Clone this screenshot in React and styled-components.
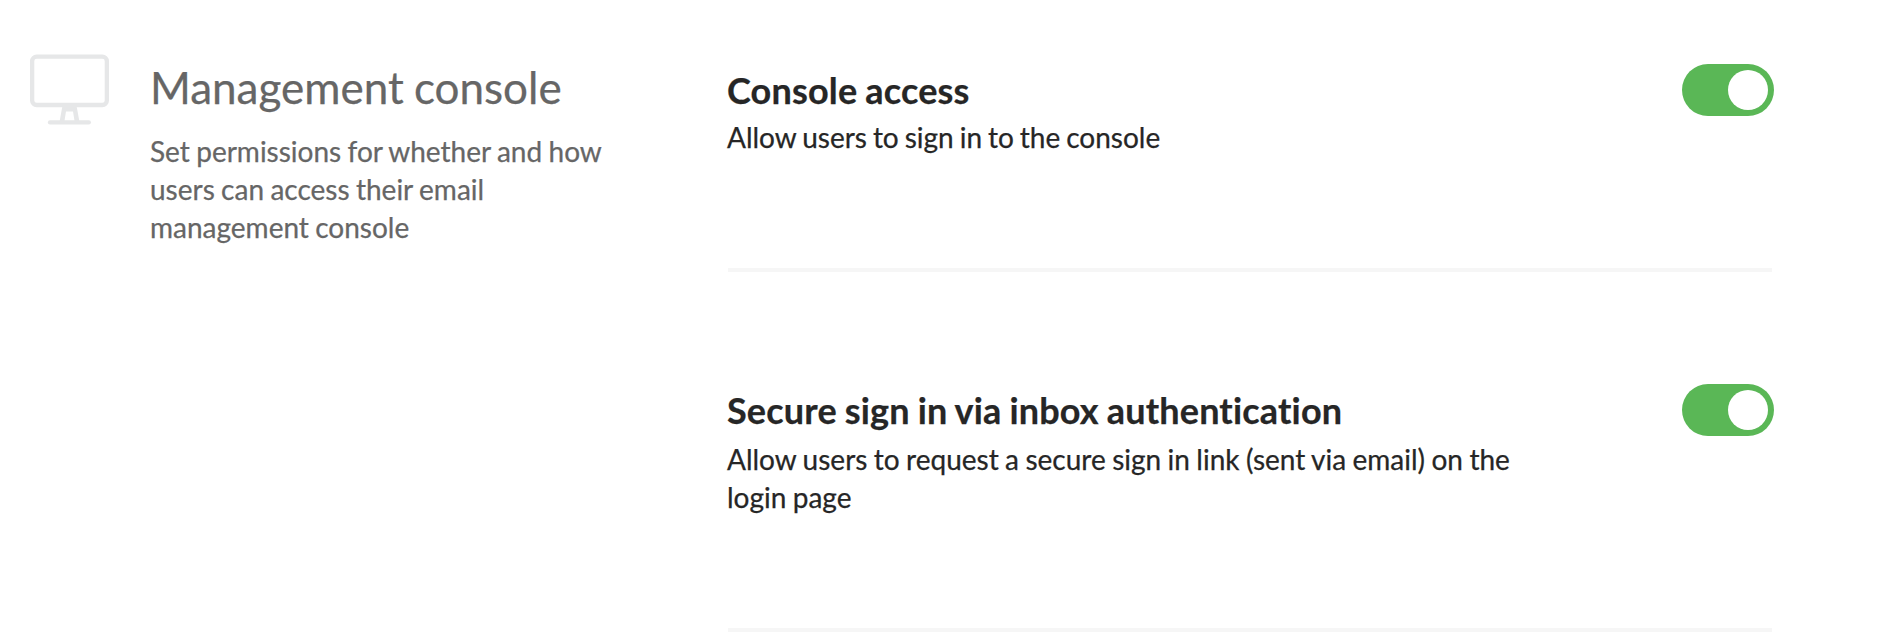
import React, { useState } from "react";
import styled, { createGlobalStyle } from "styled-components";

const settings = [
  {
    id: "console",
    title: "Console access",
    description: "Allow users to sign in to the console",
    height: 208,
    gap: 6,
    wordSpacing: -1.2,
  },
  {
    id: "secure",
    title: "Secure sign in via inbox authentication",
    description:
      "Allow users to request a secure sign in link (sent via email) on the login page",
    height: 248,
    gap: 8,
    wordSpacing: -0.75,
  },
];

const App = () => {
  const [enabled, setEnabled] = useState({ console: true, secure: true });

  const toggleHandler = (id) => {
    setEnabled({ ...enabled, [id]: !enabled[id] });
  };

  return (
    <>
      <GlobalStyle />
      <Section>
        <MonitorIcon viewBox="0 0 80 72" aria-hidden="true">
          <rect x="2.15" y="1.6" width="74.7" height="48.4" rx="4.5" />
          <path d="M20 67.4H58.8" />
          <path
            className="stand"
            d="M32.4 51H46.6L49.5 67H44.7L43 56.5H36L34.3 67H29.5Z"
          />
        </MonitorIcon>
        <Intro>
          <h2>Management console</h2>
          <p>
            Set permissions for whether and how users can access their email
            management console
          </p>
        </Intro>
        <Settings>
          {settings.map((s) => (
            <Setting key={s.id} $height={s.height}>
              <SettingText $gap={s.gap} $wordSpacing={s.wordSpacing}>
                <h3>{s.title}</h3>
                <p>{s.description}</p>
              </SettingText>
              <Toggle
                type="button"
                role="switch"
                aria-label={s.title}
                aria-checked={enabled[s.id]}
                $on={enabled[s.id]}
                onClick={() => toggleHandler(s.id)}
              >
                <Knob />
              </Toggle>
            </Setting>
          ))}
        </Settings>
      </Section>
    </>
  );
};

const GlobalStyle = createGlobalStyle`
  * {
    box-sizing: border-box;
  }
  body {
    margin: 0;
    background-color: #fff;
    font-family: Lato, sans-serif;
    font-variant-ligatures: none;
    -webkit-text-stroke: 0.25px currentColor;
    overflow: hidden;
  }
  h2, h3, p {
    margin: 0;
  }
`;

const Section = styled.section`
  display: flex;
  align-items: flex-start;
  height: 644px;
  padding-left: 30px;
`;

const MonitorIcon = styled.svg`
  flex: none;
  width: 80px;
  height: 72px;
  margin: 55px 40px 0 0;
  overflow: visible;
  fill: none;
  stroke: #e6e7e8;
  stroke-width: 4.3;
  stroke-linecap: round;

  .stand {
    fill: #e6e7e8;
    stroke: none;
  }
`;

const Intro = styled.div`
  flex: none;
  width: 470px;
  margin-right: 107px;
  padding-top: 60px;
  color: #666;

  h2 {
    margin-bottom: 18px;
    font-size: 44px;
    font-weight: 400;
    line-height: 54px;
    word-spacing: -1px;
  }
  p {
    font-size: 28px;
    line-height: 38px;
    word-spacing: -0.8px;
  }
`;

const Settings = styled.div`
  display: flex;
  flex-direction: column;
  gap: 112px;
  width: 1047px;
  padding-top: 64px;
`;

const Setting = styled.div`
  display: flex;
  justify-content: space-between;
  align-items: flex-start;
  height: ${(props) => props.$height}px;
  background: linear-gradient(#f6f6f6, #f6f6f6) 1px bottom / 1044px 4px
    no-repeat;
`;

const SettingText = styled.div`
  width: 800px;
  padding-top: 4px;
  color: #262626;

  h3 {
    margin-bottom: ${(props) => props.$gap}px;
    font-size: 36px;
    font-weight: 700;
    line-height: 44px;
    letter-spacing: 0.18px;
    word-spacing: -1px;
  }
  p {
    font-size: 28px;
    line-height: 38px;
    word-spacing: ${(props) => props.$wordSpacing}px;
  }
`;

const Toggle = styled.button`
  display: flex;
  align-items: center;
  justify-content: ${(props) => (props.$on ? "flex-end" : "flex-start")};
  width: 92px;
  height: 52px;
  padding: 0 6px;
  border: none;
  border-radius: 26px;
  background-color: ${(props) => (props.$on ? "#5ab756" : "#ccc")};
  cursor: pointer;
`;

const Knob = styled.span`
  width: 40px;
  height: 40px;
  border-radius: 50%;
  background-color: #fff;
`;

export default App;
